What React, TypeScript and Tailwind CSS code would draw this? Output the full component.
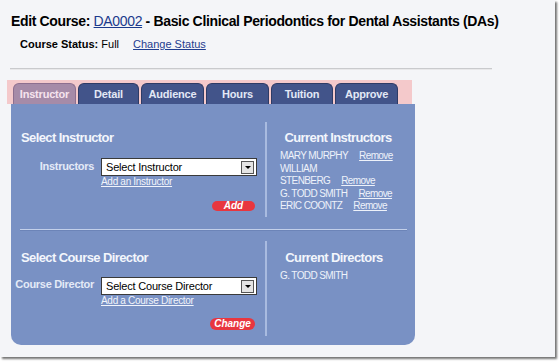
import React from "react";

const tabs: { label: string; w: string; active?: boolean }[] = [
  { label: "Instructor", w: "w-[63px]", active: true },
  { label: "Detail", w: "w-[61px]" },
  { label: "Audience", w: "w-[63px]" },
  { label: "Hours", w: "w-[63px]" },
  { label: "Tuition", w: "w-[62px]" },
  { label: "Approve", w: "w-[63px]" },
];

function Tab({ label, w, active }: { label: string; w: string; active?: boolean }) {
  return (
    <div
      className={`${w} h-[21px] rounded-t-[6px] border border-b-0 flex items-center justify-center text-[11px] font-bold tracking-[-0.2px] ${
        active
          ? "bg-[#a68ba8] border-[#8d6f8f] text-[#f6e4ee]"
          : "bg-[#42548a] border-[#2e3b66] text-[#e2e8f6]"
      }`}
    >
      {label}
    </div>
  );
}

function FakeSelect({ text }: { text: string }) {
  return (
    <div className="w-[156px] h-[18px] bg-white border border-[#3a3a3a] flex items-center justify-between pl-[4px] pr-[2px]">
      <span className="text-[11px] text-black tracking-[-0.2px] leading-[13px]">{text}</span>
      <div className="w-[13px] h-[13px] border border-[#555] bg-[#e4e4e4] flex items-center justify-center">
        <div className="w-0 h-0 border-l-[3px] border-r-[3px] border-t-[3px] border-l-transparent border-r-transparent border-t-black" />
      </div>
    </div>
  );
}

function Pill({ text, w, h }: { text: string; w: string; h: string }) {
  return (
    <div
      className={`${w} ${h} rounded-full bg-[#e8363f] text-white italic font-bold text-[10px] leading-none flex items-center justify-center`}
    >
      {text}
    </div>
  );
}

function Person({ name, remove = true }: { name: string; remove?: boolean }) {
  return (
    <div className="h-[12.5px] leading-[12.5px] text-[10px] text-[#eef2fa] tracking-[-0.6px] whitespace-nowrap">
      {name}
      {remove && <span className="ml-[11px] underline">Remove</span>}
    </div>
  );
}

export default function App() {
  return (
    <div className="w-[560px] h-[362px] bg-white font-['Liberation_Sans',Arial,sans-serif] overflow-hidden">
      <div className="w-[555px] h-[357px] bg-[#f4f5f8] shadow-[2px_2px_2px_rgba(0,0,0,0.55)] flex flex-col">
        <div className="pt-[13px] pl-[11px] text-[14px] leading-[16px] font-bold text-black tracking-[-0.35px] whitespace-nowrap">
          Edit Course: <span className="text-[#1b3a8c] underline font-normal">DA0002</span> - Basic Clinical
          Periodontics for Dental Assistants (DAs)
        </div>
        <div className="mt-[9px] pl-[20px] text-[11px] leading-[13px] text-black whitespace-nowrap">
          <span className="font-bold">Course Status:</span> Full
          <span className="ml-[14px] text-[#1f3d8f] underline">Change Status</span>
        </div>
        <div className="mt-[17px] ml-[10px] w-[482px] h-[2px] bg-[#c9cacd] border-b border-[#e8e8ea]" />

        <div className="mt-[10px] ml-[7px] w-[405px] h-[24px] bg-[#f4c9cb] flex items-end gap-[2px] pl-[6px]">
          {tabs.map((t) => (
            <Tab key={t.label} {...t} />
          ))}
        </div>

        <div className="ml-[11px] w-[404px] h-[241px] bg-[#7991c4] rounded-b-[10px] flex flex-col">
          {/* upper section */}
          <div className="flex pt-[18px] h-[125px]">
            <div className="w-[254px] pt-[8px] flex flex-col">
              <div className="pl-[10px] text-[13px] leading-[15px] font-bold text-[#f3f6fc] tracking-[-0.6px]">
                Select Instructor
              </div>
              <div className="mt-[13px] flex">
                <div className="w-[83px] pt-[2px] text-right text-[11px] leading-[13px] font-bold text-[#e4eaf7] tracking-[-0.3px]">
                  Instructors
                </div>
                <div className="ml-[7px]">
                  <FakeSelect text="Select Instructor" />
                </div>
              </div>
              <div className="ml-[90px] text-[10px] leading-[12px] text-[#f1f4fb] underline tracking-[-0.3px]">
                Add an Instructor
              </div>
              <div className="mt-[13px] flex justify-end pr-[10px]">
                <Pill text="Add" w="w-[43px]" h="h-[10px]" />
              </div>
            </div>
            <div className="w-[2px] h-[95px] bg-[#a9bbe0]" />
            <div className="flex-1 pt-[8px] flex flex-col">
              <div className="text-center pr-[6px] text-[13px] leading-[15px] font-bold text-[#f3f6fc] tracking-[-0.6px]">
                Current Instructors
              </div>
              <div className="mt-[5px] pl-[13px]">
                <Person name="MARY MURPHY" />
                <Person name="WILLIAM" remove={false} />
                <Person name="STENBERG" />
                <Person name="G. TODD SMITH" />
                <Person name="ERIC COONTZ" />
              </div>
            </div>
          </div>

          <div className="ml-[9px] w-[387px] h-[2px] bg-[#c3d0ea] border-b border-[#6c84b8]" />

          {/* lower section */}
          <div className="flex pt-[10px]">
            <div className="w-[254px] pt-[9px] flex flex-col">
              <div className="pl-[10px] text-[13px] leading-[15px] font-bold text-[#f3f6fc] tracking-[-0.6px]">
                Select Course Director
              </div>
              <div className="mt-[12px] flex">
                <div className="w-[83px] pt-[1px] text-right text-[11px] leading-[13px] font-bold text-[#e4eaf7] tracking-[-0.3px] whitespace-nowrap">
                  Course Director
                </div>
                <div className="ml-[7px]">
                  <FakeSelect text="Select Course Director" />
                </div>
              </div>
              <div className="ml-[90px] text-[10px] leading-[12px] text-[#f1f4fb] underline tracking-[-0.3px]">
                Add a Course Director
              </div>
              <div className="mt-[11px] flex justify-end pr-[10px]">
                <Pill text="Change" w="w-[45px]" h="h-[12px]" />
              </div>
            </div>
            <div className="w-[2px] h-[95px] bg-[#a9bbe0]" />
            <div className="flex-1 pt-[9px] flex flex-col">
              <div className="text-center pr-[14px] text-[13px] leading-[15px] font-bold text-[#f3f6fc] tracking-[-0.6px]">
                Current Directors
              </div>
              <div className="mt-[5px] pl-[13px]">
                <Person name="G. TODD SMITH" remove={false} />
              </div>
            </div>
          </div>
        </div>
      </div>
    </div>
  );
}
